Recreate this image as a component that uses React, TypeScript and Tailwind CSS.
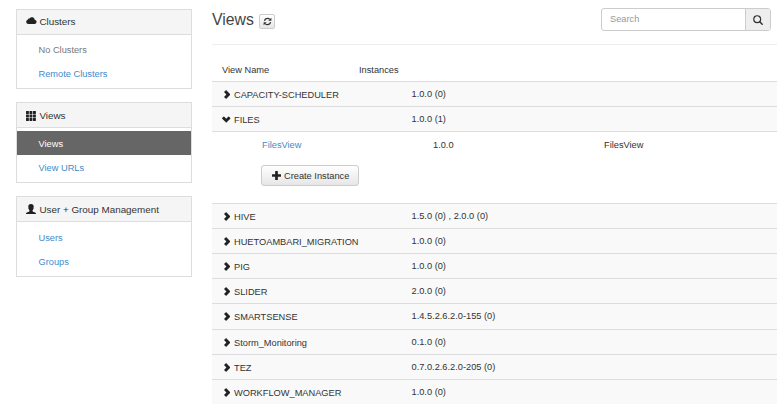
import React from "react";

type IconProps = { className?: string };

const CloudIcon = ({ className }: IconProps) => (
  <svg viewBox="0 0 22 14" className={className} fill="currentColor">
    <path d="M4.500 14A4.300 4.300 0 0 1 3.400 5.600 3.200 3.200 0 0 1 7 3.100 5.600 5.600 0 0 1 17.400 5.300 4.400 4.400 0 0 1 17.600 14Z" />
  </svg>
);

const GridIcon = ({ className }: IconProps) => (
  <svg viewBox="0 0 20 20" className={className} fill="currentColor">
    {[0, 7, 14].map((y) => [0, 7, 14].map((x) => <rect key={`${x}-${y}`} x={x} y={y} width="5.8" height="5.8" rx="0.6" />))}
  </svg>
);

const UserIcon = ({ className }: IconProps) => (
  <svg viewBox="0 0 20 20" className={className} fill="currentColor">
    <path d="M10 0C6.300 0 4.600 2.200 4.600 5.200c0 1 .1 1.700.4 2.300-.6.3-.4 1.800.4 2.600.3 1.300.9 2.200 1.600 2.900v1.200c0 .6-.5.900-1.200 1.200L1.800 16.800C.5 17.400 0 18.200 0 20h20c0-1.800-.5-2.600-1.800-3.200l-4-1.400c-.7-.3-1.200-.6-1.200-1.200V13c.7-.7 1.300-1.600 1.600-2.900.8-.8 1-2.300.4-2.600.3-.6.4-1.300.4-2.300C15.400 2.200 13.700 0 10 0Z" />
  </svg>
);

const RefreshIcon = ({ className }: IconProps) => (
  <svg viewBox="0 0 20 20" className={className} fill="currentColor">
    <path d="M3.300 8.600C4 5 6.600 3 10 3c2.200 0 4 .9 5.300 2.400M16.700 11.400C16 15 13.400 17 10 17c-2.200 0-4-.9-5.300-2.400" fill="none" stroke="currentColor" strokeWidth="2.700" />
    <path d="M18.600 1.800V8.600H11.800ZM1.400 18.200V11.400H8.200Z" />
  </svg>
);

const SearchIcon = ({ className }: IconProps) => (
  <svg viewBox="0 0 20 20" className={className} fill="none" stroke="currentColor">
    <circle cx="8.400" cy="8.400" r="6.900" strokeWidth="2.400" />
    <path d="M13.500 13.500 18.400 18.400" strokeWidth="3" strokeLinecap="round" />
  </svg>
);

const PlusIcon = ({ className }: IconProps) => (
  <svg viewBox="0 0 18 18" className={className} fill="currentColor">
    <path d="M7 0h4q.7 0 .7.700V6.300h5.600q.7 0 .7.700v4q0 .7-.7.700h-5.600v5.600q0 .7-.7.700H7q-.7 0-.7-.7v-5.600H.7Q0 11.700 0 11V7q0-.7.700-.7h5.600V.7Q6.300 0 7 0Z" />
  </svg>
);

const ChevronIcon = ({ className }: IconProps) => (
  <svg viewBox="0 0 13 18" className={className} fill="currentColor">
    <path d="M3.800.4 0 4.200 4.800 9 0 13.800l3.800 3.800q.4.400.8 0L12.700 9.400q.4-.4 0-.8L4.600.4q-.4-.4-.8 0Z" />
  </svg>
);

type Item = { label: string; kind?: "muted" | "active" };
type PanelProps = { title: string; icon: React.ReactNode; items: Item[]; className?: string; textPad?: string };

function Panel({ title, icon, items, className = "", textPad = "" }: PanelProps) {
  return (
    <section className={`w-[176px] border border-[#dddddd] bg-white ${className}`}>
      <h2 className={`flex h-[25px] items-center border-b border-[#dddddd] bg-[#f5f5f5] pl-[9px] text-[9.850px] text-[#333333] ${textPad}`}>
        <span className="flex w-[13.400px] items-center text-[#222222]">{icon}</span>
        <span className="leading-[12px]">{title}</span>
      </h2>
      <ul className="pt-[3px]">
        {items.map((item) => (
          <li
            key={item.label}
            className={`flex h-[24px] items-center pl-[21.500px] leading-[12px] ${textPad} ${
              item.kind === "active" ? "bg-[#666666] text-white" : item.kind === "muted" ? "text-[#777777]" : "text-[#428bca]"
            }`}
          >
            {item.label}
          </li>
        ))}
      </ul>
    </section>
  );
}

function ViewRow({ name, versions, open = false, height = "h-[25px]" }: { name: string; versions: string; open?: boolean; height?: string }) {
  return (
    <div className={`flex border-t border-[#dddddd] bg-[#f9f9f9] ${height}`}>
      <div className="flex w-[199.500px] items-center pt-[2px] pl-[10px]">
        <span className="mr-[2px] mb-px flex w-[10px] justify-center">
          <ChevronIcon className={open ? "h-[9px] w-[6.500px] -translate-x-px rotate-90 text-[#222222]" : "h-[9px] w-[6.500px] text-[#222222]"} />
        </span>
        <span className="leading-[12px] whitespace-nowrap">{name}</span>
      </div>
      <div className="flex items-center leading-[12px]">{versions}</div>
    </div>
  );
}

const rows = [
  { name: "HIVE", versions: "1.5.0 (0) , 2.0.0 (0)" },
  { name: "HUETOAMBARI_MIGRATION", versions: "1.0.0 (0)" },
  { name: "PIG", versions: "1.0.0 (0)" },
  { name: "SLIDER", versions: "2.0.0 (0)" },
  { name: "SMARTSENSE", versions: "1.4.5.2.6.2.0-155 (0)" },
  { name: "Storm_Monitoring", versions: "0.1.0 (0)" },
  { name: "TEZ", versions: "0.7.0.2.6.2.0-205 (0)" },
  { name: "WORKFLOW_MANAGER", versions: "1.0.0 (0)" },
];

export default function App() {
  return (
    <div className="flex h-[410px] w-[777px] overflow-hidden bg-white font-['Liberation_Sans',Arial,sans-serif] text-[9.250px] text-[#333333]">
      <aside className="w-[212px] shrink-0 pt-[9px] pl-[16px]">
        <Panel
          className="h-[80px]"
          title="Clusters"
          icon={<CloudIcon className="mb-[3px] h-[7px] w-[11px]" />}
          items={[{ label: "No Clusters", kind: "muted" }, { label: "Remote Clusters" }]}
        />
        <Panel
          className="mt-[13px] h-[81px]"
          textPad="pt-[2px]"
          title="Views"
          icon={<GridIcon className="mb-px h-[10px] w-[10px]" />}
          items={[{ label: "Views", kind: "active" }, { label: "View URLs" }]}
        />
        <Panel
          className="mt-[13px] h-[81px]"
          textPad="pt-[2px]"
          title="User + Group Management"
          icon={<UserIcon className="mb-[2px] h-[10px] w-[10px]" />}
          items={[{ label: "Users" }, { label: "Groups" }]}
        />
      </aside>

      <main className="w-[565px] shrink-0">
        <header className="flex h-[45px] items-start border-b border-[#eeeeee]">
          <h1 className="pt-[11px] text-[15.800px] leading-[18px] text-[#444444]">Views</h1>
          <button className="mt-[14px] ml-[5.500px] flex h-[15px] w-[16px] items-center justify-center rounded-[2px] border border-[#cccccc] bg-linear-to-b from-white to-[#e6e6e6]">
            <RefreshIcon className="h-[9px] w-[9px]" />
          </button>
          <div className="mt-[8px] mr-[6px] ml-auto flex h-[23px] w-[170px] rounded-[3px] border border-[#cccccc]">
            <input placeholder="Search" className="w-[143px] pt-px pl-[8px] text-[9.250px] outline-none placeholder:text-[#999999]" />
            <span className="flex flex-1 items-center justify-center border-l border-[#cccccc] bg-[#eeeeee]">
              <SearchIcon className="h-[10px] w-[10px]" />
            </span>
          </div>
        </header>

        <div className="flex h-[36px] pt-[19px] pl-[10px] leading-[12px]">
          <div className="w-[137px]">View Name</div>
          <div>Instances</div>
        </div>

        <ViewRow name="CAPACITY-SCHEDULER" versions="1.0.0 (0)" />
        <ViewRow name="FILES" versions="1.0.0 (1)" open />
        <div className="h-[72px] border-t border-[#dddddd] pt-[7px] pl-[50px]">
          <div className="flex leading-[12px]">
            <a className="w-[171px] text-[#428bca]">FilesView</a>
            <span className="w-[171px]">1.0.0</span>
            <span>FilesView</span>
          </div>
          <button className="mt-[14px] -ml-px flex h-[21px] w-[98px] items-center rounded-[3px] border border-[#cccccc] bg-linear-to-b from-white to-[#e6e6e6] pl-[9.500px] text-[#333333]">
            <PlusIcon className="mr-[3.500px] mb-px h-[9px] w-[9px] text-[#222222]" />
            <span className="leading-[12px] whitespace-nowrap">Create Instance</span>
          </button>
        </div>
        {rows.map((row) => (
          <ViewRow key={row.name} {...row} height={row.name === "SMARTSENSE" ? "h-[25.500px]" : row.name === "Storm_Monitoring" ? "h-[25.500px]" : "h-[25px]"} />
        ))}
      </main>
    </div>
  );
}
